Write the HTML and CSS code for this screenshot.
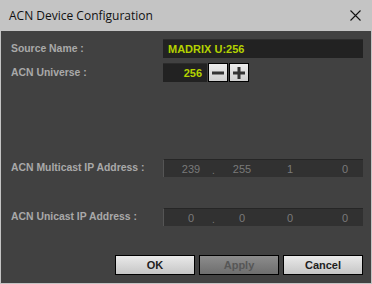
FILE: index.html
```html
<!DOCTYPE html>
<html lang="en">
<head>
    <meta charset="UTF-8">
    <title>ACN Device Configuration</title>
    <link rel="stylesheet" href="styles.css">
</head>
<body>
    <div class="dialog">
        <div class="titlebar">
            <span class="title">ACN Device Configuration</span>
            <svg class="close" width="11" height="11" viewBox="0 0 11 11">
                <path d="M0.5 0.5 L10.5 10.5 M10.5 0.5 L0.5 10.5" stroke="#111" stroke-width="1.1" fill="none"/>
            </svg>
        </div>

        <div class="content">
            <div class="row row-top">
                <label>Source Name :</label>
                <div class="field name-field">MADRIX U:256</div>
            </div>

            <div class="row row-universe">
                <label>ACN Universe :</label>
                <div class="spin">
                    <div class="field num-field">256</div>
                    <button class="spin-btn">
                        <svg width="12" height="12" viewBox="0 0 12 12"><rect x="0" y="4.5" width="12" height="3" fill="#333"/></svg>
                    </button>
                    <button class="spin-btn">
                        <svg width="12" height="12" viewBox="0 0 12 12"><rect x="0" y="4.5" width="12" height="3" fill="#333"/><rect x="4.5" y="0" width="3" height="12" fill="#333"/></svg>
                    </button>
                </div>
            </div>

            <div class="row row-ip row-multicast">
                <label>ACN Multicast IP Address :</label>
                <div class="ip-field">
                    <span>239</span><span>255</span><span>1</span><span class="last">0</span>
                    <span class="dot">.</span>
                </div>
            </div>

            <div class="row row-ip row-unicast">
                <label>ACN Unicast IP Address :</label>
                <div class="ip-field">
                    <span>0</span><span>0</span><span>0</span><span class="last">0</span>
                    <span class="dot">.</span>
                </div>
            </div>

            <div class="buttons">
                <button class="btn">OK</button>
                <button class="btn btn-disabled">Apply</button>
                <button class="btn">Cancel</button>
            </div>
        </div>
    </div>
</body>
</html>
```

FILE: styles.css
```css
html, body {
    margin: 0;
    padding: 0;
}

body {
    width: 372px;
    height: 284px;
    overflow: hidden;
}

.dialog {
    width: 372px;
    height: 284px;
    box-sizing: border-box;
    display: flex;
    flex-direction: column;
    background: #c4c4c4;
    padding: 0 1px 1px 1px;
}

.titlebar {
    height: 31px;
    display: flex;
    align-items: center;
    justify-content: space-between;
    padding: 0 10px 0 8px;
    flex-shrink: 0;
}

.title {
    font-family: "Open Sans", sans-serif;
    font-size: 12px;
    color: #111;
    padding-bottom: 1px;
}

.close {
    display: block;
    margin-bottom: 1px;
}

.content {
    flex: 1;
    background: #414141;
    padding: 8px 8px 0 10px;
    font-family: "Liberation Sans", Arial, sans-serif;
}

.row {
    display: grid;
    grid-template-columns: 152px 1fr;
    align-items: center;
}

.row label {
    font-size: 10.4px;
    font-weight: bold;
    color: #a9a9a9;
    padding-bottom: 1px;
}

.row-universe {
    margin-top: 5px;
}

.field {
    background: #222;
    border-top: 1px solid #2c2c2c;
    box-sizing: border-box;
    height: 19px;
    font-size: 11px;
    font-weight: bold;
    color: #b4d200;
    display: flex;
    align-items: center;
}

.name-field {
    padding-left: 5px;
}

.spin {
    display: flex;
}

.num-field {
    width: 44px;
    justify-content: flex-end;
    padding-right: 5px;
}

.spin-btn {
    width: 20px;
    height: 19px;
    margin: 0 0 0 1px;
    padding: 0;
    border: 1px solid #000;
    background: linear-gradient(#ececec, #cfcfcf);
    display: flex;
    align-items: center;
    justify-content: center;
}

.row-multicast {
    margin-top: 77px;
}

.row-unicast {
    margin-top: 31px;
}

.ip-field {
    position: relative;
    height: 18px;
    box-sizing: border-box;
    background: #313131;
    border-top: 1px solid #262626;
    border-left: 1px solid #555;
    display: grid;
    grid-template-columns: 54px 48px 48px 1fr;
    align-items: center;
    font-size: 11px;
    color: #7a7a7a;
}

.ip-field span {
    text-align: center;
}

.ip-field .last {
    text-align: right;
    padding-right: 15px;
}

.ip-field .dot {
    position: absolute;
    left: 48px;
    top: 5px;
    font-size: 10px;
}

.buttons {
    display: flex;
    justify-content: flex-end;
    gap: 4px;
    margin-top: 29px;
    padding-right: 0;
}

.btn {
    width: 80px;
    height: 20px;
    padding: 0;
    border: 1px solid #000;
    background: linear-gradient(#e9e9e9, #c6c6c6);
    font-family: "Liberation Sans", Arial, sans-serif;
    font-size: 11px;
    font-weight: bold;
    color: #1e1e1e;
}

.btn-disabled {
    background: linear-gradient(#8c8c8c, #6e6e6e);
    color: #565656;
}
```
